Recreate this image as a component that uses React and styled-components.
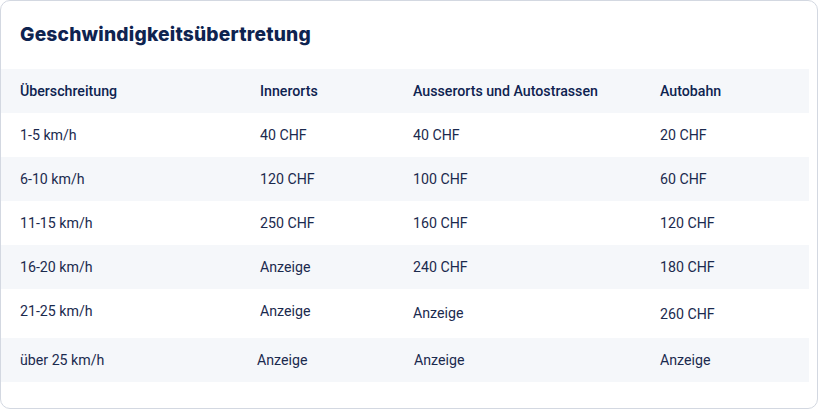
import styled, { createGlobalStyle } from "styled-components";

const GlobalStyle = createGlobalStyle`
  html, body {
    margin: 0;
    padding: 0;
    background: #ffffff;
  }
`;

const Card = styled.div`
  box-sizing: border-box;
  width: 818px;
  height: 409px;
  border: 1px solid #d3d8e1;
  border-radius: 10px;
  background: #ffffff;
  padding: 0 8px 0 0;
  display: flex;
  flex-direction: column;
`;

const Title = styled.h2`
  margin: 0;
  height: 68px;
  padding-left: 19px;
  display: flex;
  align-items: center;
  padding-bottom: 3px;
  box-sizing: border-box;
  font-family: Inter, "Noto Sans", sans-serif;
  font-weight: 800;
  font-size: 19.2px;
  letter-spacing: 0.2px;
  color: #0e2350;
`;

const Table = styled.div`
  display: flex;
  flex-direction: column;
`;

const Row = styled.div`
  display: grid;
  grid-template-columns: 240px 153px 247px 1fr;
  align-items: center;
  height: ${({ $height }) => $height || 44}px;
  background: ${({ $striped }) => ($striped ? "#f5f7fa" : "transparent")};
`;

const Cell = styled.div`
  padding-left: 19px;
  font-family: Roboto, "Noto Sans", sans-serif;
  font-size: 14.2px;
  font-weight: ${({ $head }) => ($head ? 500 : 400)};
  color: ${({ $head }) => ($head ? "#0e2350" : "#1b2a4e")};
  transform: translate(${({ $dx }) => $dx || 0}px, ${({ $dy }) => $dy || 0}px);
`;

const head = ["Überschreitung", "Innerorts", "Ausserorts und Autostrassen", "Autobahn"];

const rows = [
  { cells: ["1-5 km/h", "40 CHF", "40 CHF", "20 CHF"] },
  { cells: ["6-10 km/h", "120 CHF", "100 CHF", "60 CHF"] },
  { cells: ["11-15 km/h", "250 CHF", "160 CHF", "120 CHF"] },
  { cells: ["16-20 km/h", "Anzeige", "240 CHF", "180 CHF"] },
  { cells: ["21-25 km/h", "Anzeige", "Anzeige", "260 CHF"], height: 49, dy: [-3, -3, -1, 0] },
  { cells: ["über 25 km/h", "Anzeige", "Anzeige", "Anzeige"], dx: [0, -3, 1, 0] },
];

const App = () => {
  return (
    <>
      <GlobalStyle />
      <Card>
        <Title>Geschwindigkeitsübertretung</Title>
        <Table>
          <Row $striped>
            {head.map((h) => (
              <Cell key={h} $head>
                {h}
              </Cell>
            ))}
          </Row>
          {rows.map((r, i) => (
            <Row key={i} $striped={i % 2 === 1} $height={r.height}>
              {r.cells.map((c, j) => (
                <Cell key={j} $dx={r.dx && r.dx[j]} $dy={r.dy && r.dy[j]}>
                  {c}
                </Cell>
              ))}
            </Row>
          ))}
        </Table>
      </Card>
    </>
  );
};

export default App;
